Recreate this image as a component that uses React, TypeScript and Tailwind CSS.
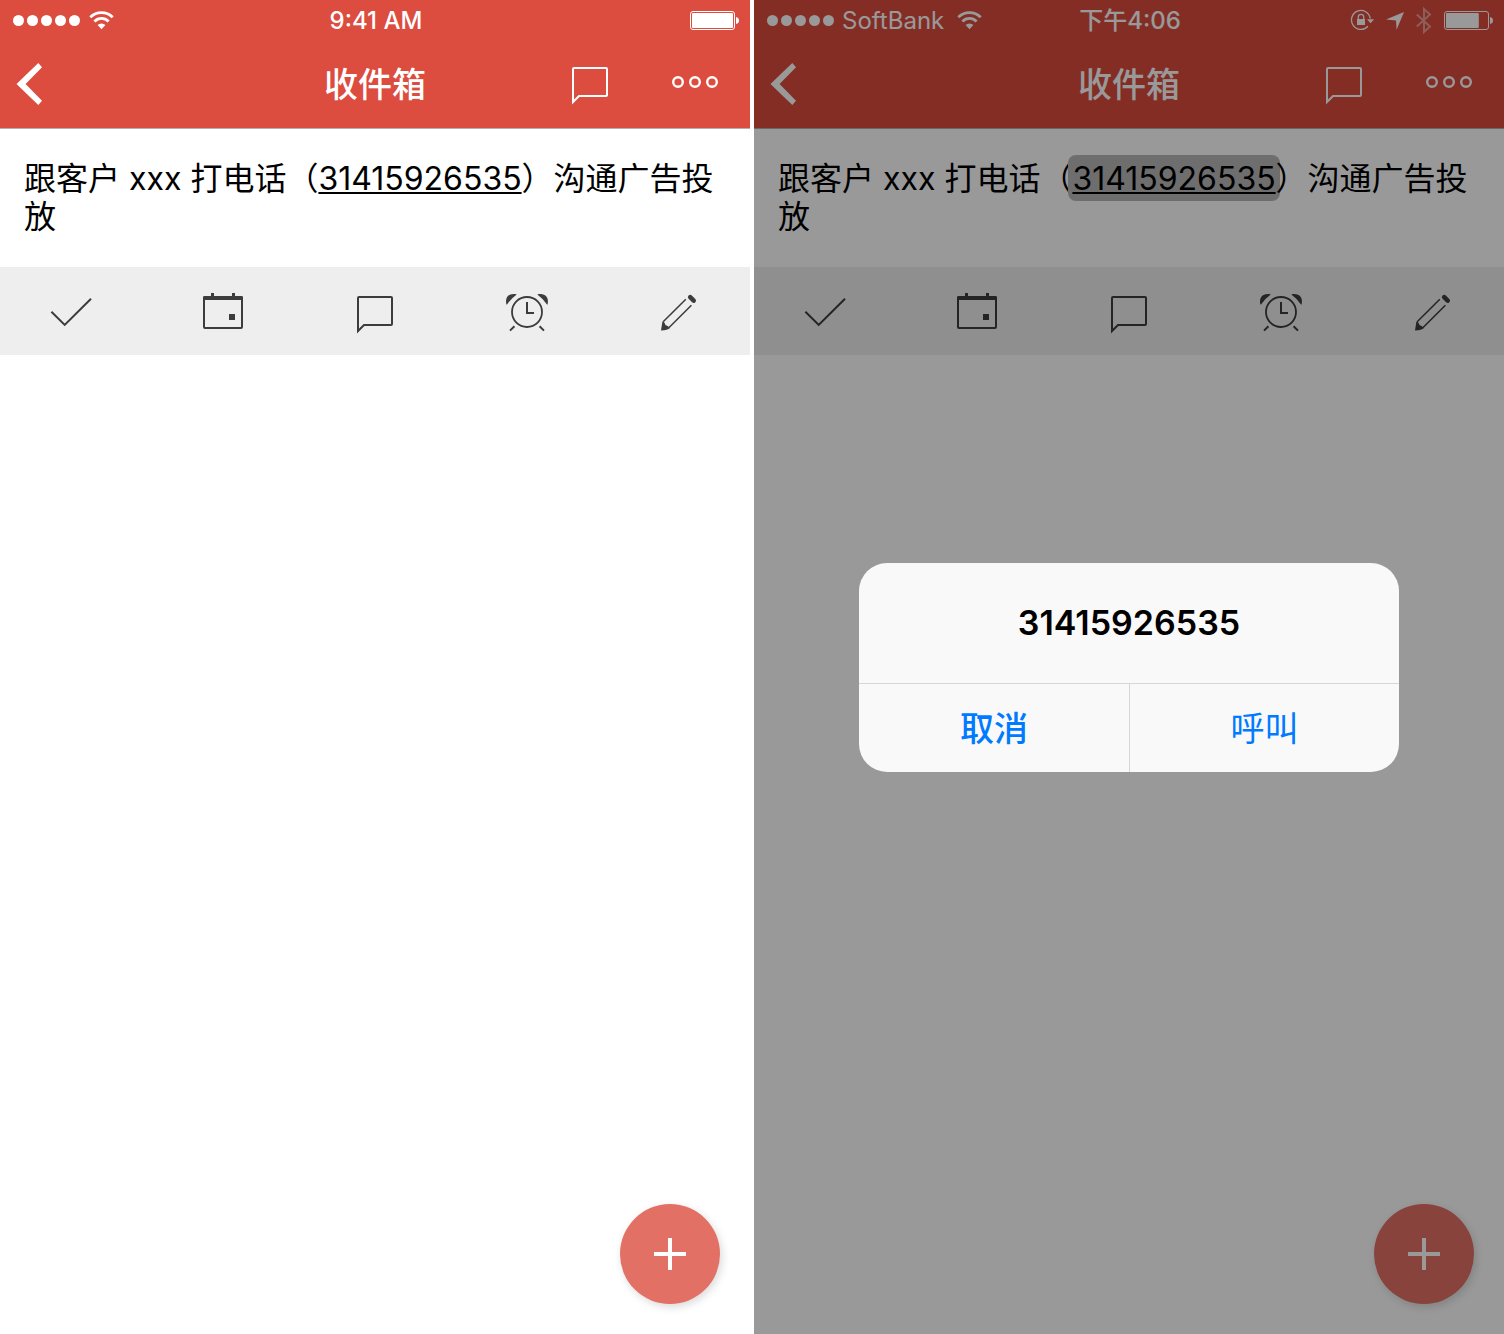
import type { ReactNode } from "react";

const PHONE = "31415926535";

function WifiIcon() {
  return (
    <svg width="26" height="20" viewBox="0 0 26 20" fill="none" stroke="currentColor" strokeWidth="2.8" aria-hidden="true">
      <path d="M2.3 7.3A15.8 15.8 0 0 1 24.7 7.3" />
      <path d="M6.4 11.4A10 10 0 0 1 20.6 11.4" />
      <path d="M13.5 19.2 9.6 15.1A5.6 5.6 0 0 1 17.4 15.1Z" fill="currentColor" stroke="none" />
    </svg>
  );
}

function BatteryIcon({ level }: { level: number }) {
  return (
    <svg width="49" height="20" viewBox="0 0 49 20" aria-hidden="true">
      <rect x="0.5" y="1.5" width="44" height="18" rx="2.5" fill="none" stroke="currentColor" />
      <rect x="2" y="3" width={41 * level} height="15" rx="1" fill="currentColor" />
      <path d="M46 7Q49 7.5 49 10.5T46 14Z" fill="currentColor" />
    </svg>
  );
}

function RotationLockIcon() {
  return (
    <svg width="24" height="22" viewBox="0 0 24 22" fill="none" stroke="currentColor" aria-hidden="true">
      <path d="M17.9 17.2A9.4 9.4 0 1 1 20.2 9.5" strokeWidth="1.3" />
      <path d="M17 10.3H24L20.5 14.2Z" fill="currentColor" stroke="none" />
      <rect x="7" y="10" width="8" height="6" fill="currentColor" stroke="none" />
      <path d="M8.3 10.5V8A2.7 2.7 0 0 1 13.7 8V10.5" strokeWidth="1.3" />
    </svg>
  );
}

function LocationIcon() {
  return (
    <svg width="18" height="20" viewBox="0 0 18 20" fill="currentColor" aria-hidden="true">
      <path d="M18 2 10.6 19.8 10 10.6 0 9.6Z" />
    </svg>
  );
}

function BluetoothIcon() {
  return (
    <svg className="opacity-45" width="16" height="28" viewBox="0 0 16 28" fill="none" stroke="currentColor" strokeWidth="2" aria-hidden="true">
      <path d="M0.8 8.4 14 20.6 8 26V3L14 8.4 0.8 20.6" />
    </svg>
  );
}

function ToolIcon({ children }: { children: ReactNode }) {
  return (
    <svg width="48" height="48" viewBox="0 0 48 48" fill="none" stroke="currentColor" strokeWidth="2" aria-hidden="true">
      {children}
    </svg>
  );
}

const tools = [
  { label: "完成", drawing: <path d="M4.4 24.8 17.7 37.9 44 11.7" /> },
  {
    label: "日期",
    drawing: (
      <>
        <rect x="5" y="10" width="38" height="31" rx="1" />
        <path d="M4 10.5Q4 9 5.5 9H12V6H15V9H33V6H36V9H42.5Q44 9 44 10.5V13H4ZM30 27H36V33H30Z" fill="currentColor" stroke="none" />
      </>
    ),
  },
  { label: "评论", drawing: <path d="M7 44V11Q7 10 8 10H40Q41 10 41 11V37Q41 38 40 38H13Z" /> },
  {
    label: "提醒",
    drawing: (
      <>
        <circle cx="24" cy="25" r="15" strokeWidth="1.8" />
        <path d="M24 15V26H31" />
        <path d="M3.4 17.4C1.6 9.5 6.5 5.8 13.4 7.2V7.8Q8.4 11.4 4 17.4Z" fill="currentColor" stroke="none" />
        <path d="M44.6 17.4C46.4 9.5 41.5 5.8 34.6 7.2V7.8Q39.6 11.4 44 17.4Z" fill="currentColor" stroke="none" />
        <path d="M7 43.6 11.4 39.2M41 43.6 36.6 39.2" />
      </>
    ),
  },
  {
    label: "编辑",
    drawing: (
      <>
        <path d="M8.2 34.8 30.8 12.2M13.6 41 36.4 18.2" strokeWidth="1.5" />
        <path d="M6 43.4 7.4 34.4Q9.6 34.6 10.4 38 13.6 39 14.6 41.2Q13 43 6 43.4Z" fill="currentColor" stroke="none" />
        <path d="M35.2 10.2 38.7 13.6" strokeWidth="4.6" strokeLinecap="round" />
      </>
    ),
  },
];

function Screen({ carrier, time, status, active, children }: {
  carrier?: string;
  time: string;
  status: ReactNode;
  active?: boolean;
  children?: ReactNode;
}) {
  return (
    <section className="relative flex min-h-screen min-w-0 flex-1 flex-col bg-white">
      <header className="border-b border-[#b0b0b0] bg-[#dc4c3f] text-white">
        <div className="grid h-10 grid-cols-[1fr_auto_1fr] items-center pr-[11px] pl-[13px]">
          <div className="flex items-center gap-2">
            <div className="flex gap-[3px]">
              {[0, 1, 2, 3, 4].map((n) => (
                <span key={n} className="size-[11px] rounded-full bg-white" />
              ))}
            </div>
            {carrier && <span className="mr-1 pt-0.5 text-[24px] leading-6">{carrier}</span>}
            <WifiIcon />
          </div>
          <div className="pt-0.5 text-[24px] leading-6 font-medium">{time}</div>
          <div className="flex items-center justify-end gap-3">{status}</div>
        </div>
        <div className="grid h-[88px] grid-cols-[1fr_auto_1fr] items-center pr-8 pl-4">
          <button type="button" aria-label="返回" className="justify-self-start">
            <svg width="28" height="44" viewBox="0 0 28 44" fill="currentColor" aria-hidden="true">
              <path d="M0.5 22 22.3 1 26 5.2 9.6 22 26 38.8 22.3 43Z" />
            </svg>
          </button>
          <h1 className="pt-0.5 pl-4 text-[34px] leading-10 font-medium">收件箱</h1>
          <div className="flex items-center justify-end gap-[63px]">
            <button type="button" aria-label="评论" className="pt-1">
              <svg width="38" height="40" viewBox="0 0 38 40" fill="none" stroke="currentColor" strokeWidth="2" aria-hidden="true">
                <path d="M2 36V3Q2 2 3 2H35Q36 2 36 3V29Q36 30 35 30H8Z" />
              </svg>
            </button>
            <button type="button" aria-label="更多" className="pb-1">
              <svg width="46" height="12" viewBox="0 0 46 12" fill="none" stroke="currentColor" strokeWidth="2.4" aria-hidden="true">
                <circle cx="6" cy="6" r="4.8" />
                <circle cx="23" cy="6" r="4.8" />
                <circle cx="40" cy="6" r="4.8" />
              </svg>
            </button>
          </div>
        </div>
      </header>
      <p className="px-6 pt-[31px] pb-[31px] text-[32px] leading-[38px] text-black">
        跟客户 xxx 打电话（
        <a
          href={`tel:${PHONE}`}
          className={
            active
              ? "-mx-1 rounded-lg bg-[#b8b8b8] px-1 pt-1 pb-[3px] underline decoration-2 underline-offset-2"
              : "underline decoration-2 underline-offset-2"
          }
        >
          {PHONE}
        </a>
        ）沟通广告投放
      </p>
      <div className="flex h-[88px] items-center justify-between bg-[#eeeeee] px-[47px] text-[#3c3c3c]">
        {tools.map((tool) => (
          <button key={tool.label} type="button" aria-label={tool.label}>
            <ToolIcon>{tool.drawing}</ToolIcon>
          </button>
        ))}
      </div>
      <button
        type="button"
        aria-label="添加任务"
        className="mt-auto mr-[30px] mb-[30px] flex size-[100px] items-center justify-center self-end rounded-full bg-[#e37065] text-white shadow-[2px_3px_8px_rgba(0,0,0,0.15)]"
      >
        <svg width="32" height="32" viewBox="0 0 32 32" stroke="currentColor" strokeWidth="4" aria-hidden="true">
          <path d="M16 0V32M0 16H32" />
        </svg>
      </button>
      {children}
    </section>
  );
}

function CallDialog() {
  return (
    <div className="absolute inset-0 flex items-center justify-center bg-black/40">
      <div role="dialog" aria-labelledby="call-title" className="w-[540px] overflow-hidden rounded-[28px] bg-[#f9f9f9]">
        <h2 id="call-title" className="flex h-[120px] items-center justify-center text-[34px] leading-10 font-semibold text-black">
          {PHONE}
        </h2>
        <div className="grid grid-cols-2 border-t border-[#d6d6d6] text-[34px] leading-10 text-[#007aff]">
          <button type="button" className="h-[88px] pt-0.5 font-medium">取消</button>
          <button type="button" className="h-[88px] border-l border-[#d6d6d6] pt-0.5">呼叫</button>
        </div>
      </div>
    </div>
  );
}

export default function App() {
  return (
    <main className="flex gap-1 bg-white font-['Inter','Noto_Sans_CJK_SC',sans-serif]" lang="zh-CN">
      <Screen time="9:41 AM" status={<BatteryIcon level={1} />} />
      <Screen
        carrier="SoftBank"
        time="下午4:06"
        active
        status={
          <>
            <RotationLockIcon />
            <LocationIcon />
            <BluetoothIcon />
            <BatteryIcon level={0.8} />
          </>
        }
      >
        <CallDialog />
      </Screen>
    </main>
  );
}
